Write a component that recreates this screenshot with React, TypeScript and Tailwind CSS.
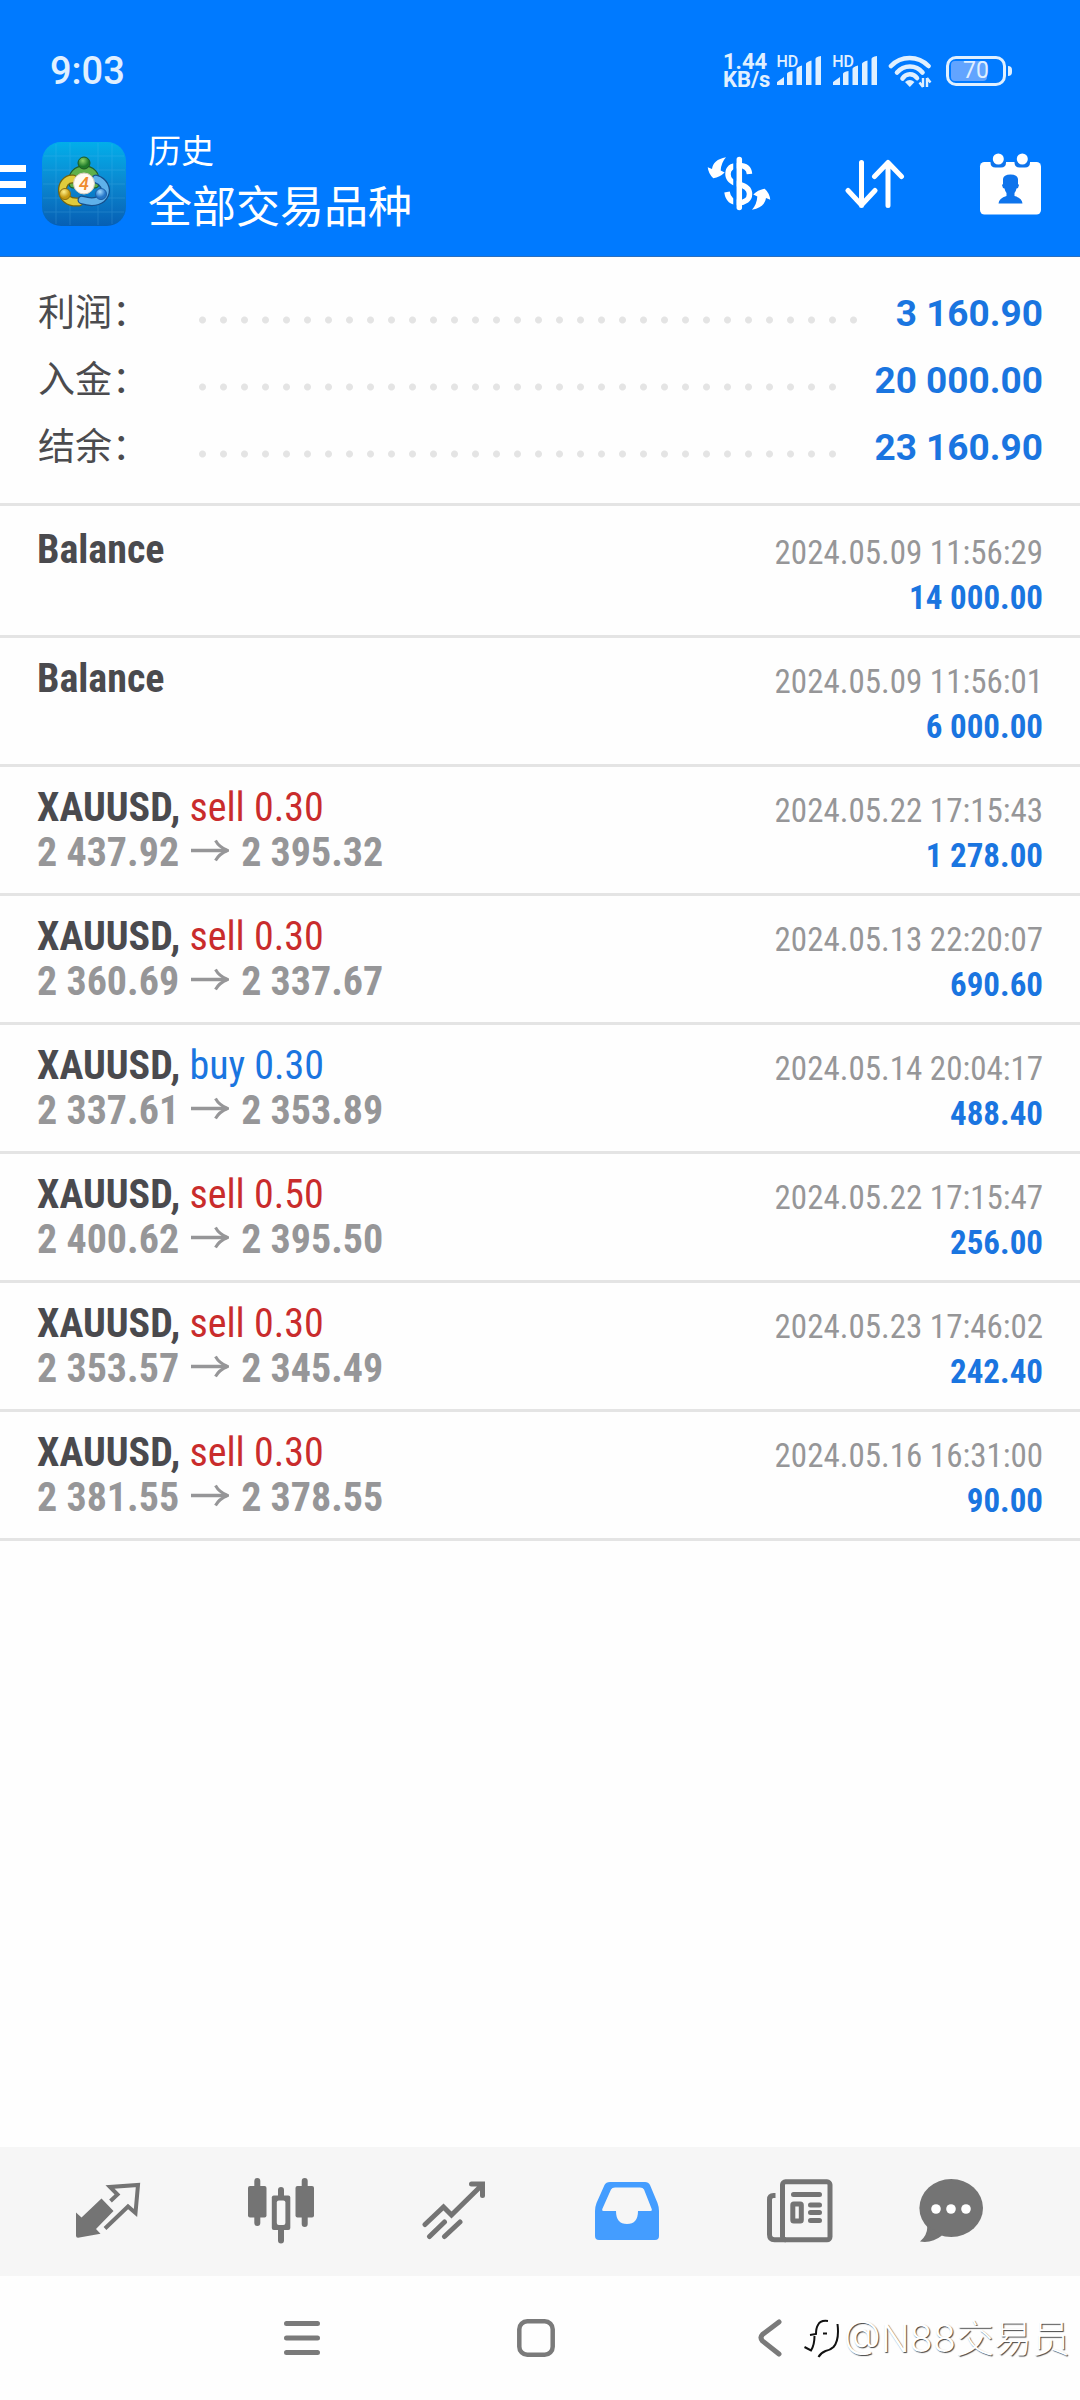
import React from "react";

type Deal = {
  symbol: string;
  side?: "buy" | "sell";
  volume?: string;
  open?: string;
  close?: string;
  time: string;
  profit: string;
};

const summary = [
  { label: "利润", value: "3 160.90" },
  { label: "入金", value: "20 000.00" },
  { label: "结余", value: "23 160.90" },
];

const deals: Deal[] = [
  { symbol: "Balance", time: "2024.05.09 11:56:29", profit: "14 000.00" },
  { symbol: "Balance", time: "2024.05.09 11:56:01", profit: "6 000.00" },
  { symbol: "XAUUSD", side: "sell", volume: "0.30", open: "2 437.92", close: "2 395.32", time: "2024.05.22 17:15:43", profit: "1 278.00" },
  { symbol: "XAUUSD", side: "sell", volume: "0.30", open: "2 360.69", close: "2 337.67", time: "2024.05.13 22:20:07", profit: "690.60" },
  { symbol: "XAUUSD", side: "buy", volume: "0.30", open: "2 337.61", close: "2 353.89", time: "2024.05.14 20:04:17", profit: "488.40" },
  { symbol: "XAUUSD", side: "sell", volume: "0.50", open: "2 400.62", close: "2 395.50", time: "2024.05.22 17:15:47", profit: "256.00" },
  { symbol: "XAUUSD", side: "sell", volume: "0.30", open: "2 353.57", close: "2 345.49", time: "2024.05.23 17:46:02", profit: "242.40" },
  { symbol: "XAUUSD", side: "sell", volume: "0.30", open: "2 381.55", close: "2 378.55", time: "2024.05.16 16:31:00", profit: "90.00" },
];

const Signal = () => (
  <div className="flex items-start">
    <span className="-mr-[22px] text-[16px] leading-3 font-medium">HD</span>
    <svg width="46" height="30" viewBox="0 0 46 30" fill="currentColor" aria-hidden="true">
      <path d="M1 29v-3l7-5v8zM11 29V18q0-2 5.500-3v14zM20.500 29V13q0-2 5.500-3.500V29zM30 29V8q0-2 5.500-3.500V29zM39.500 29V3q0-2 5.500-3v29z" />
    </svg>
  </div>
);

const Wifi = () => (
  <svg width="44" height="34" viewBox="0 0 44 34" aria-hidden="true">
    <g fill="none" stroke="currentColor" strokeWidth="4.600" strokeLinecap="round">
      <path d="M3 12C13 1.300 30 1.300 40.500 12" />
      <path d="M9 18.500C16 10.500 28 10.500 34.500 18.500" />
      <path d="M14.500 24.500C18 19 25.500 19 29 24" />
    </g>
    <path d="M17 28q4.700-4 9.500 0l-4.700 5z" fill="currentColor" />
    <path d="M35 24v9M39 33v-9M31.500 28.500l3.500 4.500M42.500 28.500L39 24" stroke="currentColor" strokeWidth="2.400" />
  </svg>
);

const StatusBar = () => (
  <div className="flex h-[132px] items-center justify-between pt-2.5 pr-[68px] pl-[50px] text-[#e0f0ff]">
    <span className="text-[38px] font-medium">9:03</span>
    <div className="flex items-center">
      <div className="mr-1.5 text-[22px] leading-[18px] font-bold">
        <p>1.44</p>
        <p>KB/s</p>
      </div>
      <div className="flex gap-2.5">
        <Signal />
        <Signal />
      </div>
      <span className="ml-2.5">
        <Wifi />
      </span>
      <div className="relative ml-3.5 flex h-[30px] w-[60px] items-center justify-center rounded-[10px] border-[3px] border-current">
        <div className="absolute inset-y-0.5 left-0.5 w-[36px] rounded-sm bg-[#62a4ff]" />
        <span className="relative text-[23px] leading-6">70</span>
      </div>
      <div className="ml-0.5 h-2.5 w-1 rounded-r-sm bg-current" />
    </div>
  </div>
);

const AppLogo = () => (
  <svg className="h-[84px] w-[84px]" viewBox="0 0 84 84" role="img" aria-label="MetaTrader 4">
    <defs>
      <linearGradient id="tile" x1="0" y1="0" x2="0" y2="1">
        <stop offset="0" stopColor="#02aeea" />
        <stop offset="0.500" stopColor="#0b87cf" />
        <stop offset="1" stopColor="#065fb4" />
      </linearGradient>
      <radialGradient id="green" cx="0.400" cy="0.300">
        <stop offset="0" stopColor="#8fd46a" />
        <stop offset="1" stopColor="#1f7a2a" />
      </radialGradient>
      <radialGradient id="yellow" cx="0.400" cy="0.300">
        <stop offset="0" stopColor="#fff08a" />
        <stop offset="1" stopColor="#c79a12" />
      </radialGradient>
      <radialGradient id="blue" cx="0.400" cy="0.300">
        <stop offset="0" stopColor="#a5dbff" />
        <stop offset="1" stopColor="#2576c8" />
      </radialGradient>
    </defs>
    <rect width="84" height="84" rx="19" fill="url(#tile)" />
    <path d="M14 2v80M28 1v82M56 1v82M70 2v80M2 14h80M1 28h82M1 42h82M1 56h82M2 70h80" stroke="#6cc5f5" strokeWidth="1" opacity="0.200" />
    <g fill="none" strokeLinecap="round">
      <path d="M31 42C27 23 57 23 53 42" stroke="#21602c" strokeWidth="9" />
      <path d="M31 42C27 23 57 23 53 42" stroke="#5fb04a" strokeWidth="6.500" />
      <path d="M31 37C17 36 15 62 37 60" stroke="#73640f" strokeWidth="9" />
      <path d="M31 37C17 36 15 62 37 60" stroke="#e0cb3c" strokeWidth="6.500" />
      <path d="M54 37C70 42 66 66 40 58" stroke="#154f8c" strokeWidth="9" />
      <path d="M54 37C70 42 66 66 40 58" stroke="#5fb1ea" strokeWidth="6.500" />
    </g>
    <circle cx="42" cy="21" r="6" fill="url(#green)" stroke="#1c5a24" />
    <circle cx="23" cy="52" r="5.500" fill="url(#yellow)" stroke="#8a6d10" />
    <circle cx="59" cy="52" r="5.500" fill="url(#blue)" stroke="#1c5fa8" />
    <circle cx="42" cy="41.500" r="10.500" fill="#fffaf2" stroke="#d9cfc0" />
    <text x="42" y="48" textAnchor="middle" fontSize="18" fontStyle="italic" fontWeight="500" fill="#ef8b2c">
      4
    </text>
  </svg>
);

const DollarIcon = () => (
  <svg width="64" height="56" viewBox="0 0 64 56" aria-hidden="true">
    <path
      d="M42.500 18C42 12 38 9.500 32 9.500C24 9.500 21 13 21 18C21 24 25 26.500 32 28.500C39 30 42.500 33 42.500 38C42.500 43.500 38 46.500 32 46.500C25 46.500 21 43 20 36"
      fill="none"
      stroke="#fff"
      strokeWidth="5.500"
    />
    <path d="M28 4v48" stroke="#007aff" strokeWidth="3.500" />
    <path d="M32.300 3.500v48" stroke="#fff" strokeWidth="5.500" strokeLinecap="round" />
    <path id="swap" d="M19 1.300C10 3 6 7 5 13L.700 11.300Q1.500 18 6.300 22.300Q13 21 17.700 16.500L13.700 14.500Q14 7 19 1.300Z" fill="#fff" />
    <use href="#swap" transform="rotate(180 32 27.500)" />
  </svg>
);

const SortIcon = () => (
  <svg width="60" height="50" viewBox="0 0 60 50" fill="none" stroke="#fff" strokeWidth="5" strokeLinecap="round" strokeLinejoin="round" aria-hidden="true">
    <path d="M16.500 3.500v43M3 31.500l13.500 14.500L30 31.500" />
    <path d="M43 46.500v-43M29.500 17.500L43 3.500l13.500 14" />
  </svg>
);

const CalendarIcon = () => (
  <svg width="63" height="64" viewBox="0 0 63 64" aria-hidden="true">
    <rect x="1" y="10" width="61" height="52.500" rx="4.500" fill="#fff" />
    <g fill="#0e74ec">
      <path d="M11.500 9.500h15.500v1q0 5-5 5h-5.500q-5 0-5-5zM35.500 9.500h15.500v1q0 5-5 5h-5.500q-5 0-5-5z" />
      <path d="M24 27q.500-4.500 7.500-4.500t7.500 4.500v5l1 1l-1 3l-1.500.500q-.500 2.500-2 4.500v3q7.500 2 8 7.500h-24q.500-5.500 8-7.500v-3q-1.500-2-2-4.500l-1.500-.500l-1-3l1-1z" />
    </g>
    <circle cx="19.300" cy="7" r="5.500" fill="#fff" />
    <circle cx="43.300" cy="7" r="5.500" fill="#fff" />
  </svg>
);

const Header = () => (
  <header className="border-b border-[#2a6fbf] bg-[#007aff] text-white">
    <StatusBar />
    <div className="flex items-center pb-4">
      <button type="button" aria-label="菜单" className="mb-1 flex w-[26px] flex-col gap-[9px]">
        <span className="h-[7px] w-full bg-white" />
        <span className="h-[7px] w-full bg-white" />
        <span className="h-[7px] w-full bg-white" />
      </button>
      <div className="mb-1 ml-4">
        <AppLogo />
      </div>
      <div className="ml-[22px] flex-1">
        <p className="text-[33px] leading-10">历史</p>
        <h1 className="mt-1 text-[44px] leading-[64px]">全部交易品种</h1>
      </div>
      <div className="mb-1 flex items-center gap-[74px] pr-[38px]">
        <button type="button" aria-label="货币">
          <DollarIcon />
        </button>
        <button type="button" aria-label="排序">
          <SortIcon />
        </button>
        <button type="button" aria-label="日期">
          <CalendarIcon />
        </button>
      </div>
    </div>
  </header>
);

const Summary = () => (
  <section className="border-b-[3px] border-[#e4e4e4] pt-[23px] pr-[37px] pb-[22px] pl-[38px]">
    {summary.map((item) => (
      <div key={item.label} className="flex h-[67px] items-center">
        <span className="w-[154px] text-[37px] text-[#4b4b4e]">{item.label}：</span>
        <span className="mr-8 h-[21px] flex-1 bg-[radial-gradient(circle,#e4e4e4_3px,transparent_4px)] bg-[length:21px_8px] bg-bottom-left bg-repeat-x" />
        <span className="text-[37px] font-bold text-[#1a75e0]">{item.value}</span>
      </div>
    ))}
  </section>
);

const PriceArrow = () => (
  <svg className="mx-3 inline-block align-baseline" width="38" height="31" viewBox="0 0 38 31" fill="none" stroke="currentColor" role="img" aria-label="→">
    <path d="M0 15.500h36" strokeWidth="3.500" />
    <path d="M24.500 5.500q3.500 6.500 12 10q-8.500 3.500-12 10" strokeWidth="3" />
  </svg>
);

const DealRow = ({ deal }: { deal: Deal }) => (
  <li className="flex h-[129px] justify-between border-b-[3px] border-[#e4e4e4] pt-[18px] pr-[37px] pl-[37px] font-['Roboto_Condensed','Liberation_Sans_Narrow',Roboto,sans-serif]">
    <div className="text-[40px] leading-[45px]">
      <p>
        <span className="font-bold text-[#4a4a4e]">
          {deal.symbol}
          {deal.side && ","}
        </span>
        {deal.side && (
          <span className={deal.side === "sell" ? "text-[#c92c2c]" : "text-[#1a75e0]"}>
            {" "}
            {deal.side} {deal.volume}
          </span>
        )}
      </p>
      {deal.open && (
        <p className="font-bold text-[#969698]">
          {deal.open}
          <PriceArrow />
          {deal.close}
        </p>
      )}
    </div>
    <div className="pt-[3px] text-right text-[33px] leading-[45px]">
      <p className="text-[#969698]">{deal.time}</p>
      <p className="font-bold text-[#1a75e0]">{deal.profit}</p>
    </div>
  </li>
);

const QuotesIcon = () => (
  <svg width="66" height="64" viewBox="0 -4 66 64" aria-hidden="true">
    <path d="M1 29.500l5.500 5L26.500 15.500l12 12.500L21 46l4.500 4.700L3 54.700q-2 0-2-2z" fill="currentColor" />
    <path d="M30 45.500L53 23.500l7.500 6.500l2.500-28l-28 2l7.500 7.500L35.500 18" fill="none" stroke="currentColor" strokeWidth="4" />
  </svg>
);

const ChartIcon = () => (
  <svg width="66" height="66" viewBox="0 0 66 66" fill="currentColor" aria-hidden="true">
    <path d="M9.300 3v42M33 12v50.500M56.700 3v43" stroke="currentColor" strokeWidth="6" strokeLinecap="round" />
    <rect x="0" y="8" width="18.500" height="31.500" rx="2" />
    <rect x="23.800" y="17.500" width="18.500" height="34.500" rx="2" />
    <rect x="47.500" y="8" width="18.500" height="31.500" rx="2" />
    <rect x="28.800" y="22.500" width="8.600" height="24.500" rx="2" fill="#f6f6f6" />
  </svg>
);

const TradeIcon = () => (
  <svg width="64" height="60" viewBox="0 0 64 60" fill="none" stroke="currentColor" strokeWidth="5" strokeLinecap="round" aria-hidden="true">
    <path d="M3 43.500L21.500 26l8 8L60 4M49.500 3h11v11.500M22.500 41L7.500 55.500M38 41L22.500 55.500" />
  </svg>
);

const HistoryIcon = () => (
  <svg width="64" height="58" viewBox="0 0 64 58" fill="currentColor" fillRule="evenodd" aria-hidden="true">
    <path d="M15 0h35q3.500 0 5 3l7.500 18q1.500 4 1.500 8v25q0 4-4 4H4q-4 0-4-4V29q0-4 1.500-8L9.500 3q1.500-3 5.500-3zM20 5.500q-3 0-4 2L7.500 26.500q-1 2.500 1 2.500h12.500q0 13 11 13t11-13h12.500q2 0 1-2.500L49 7.500q-1-2-4-2z" />
  </svg>
);

const NewsIcon = () => (
  <svg width="67" height="64" viewBox="0 0 67 64" fill="none" stroke="currentColor" strokeWidth="5" aria-hidden="true">
    <rect x="16.500" y="2.800" width="47.500" height="58" rx="3" />
    <path d="M9.500 16.500h-2q-4 0-4 4v35q0 5.300 5 5.300H20" />
    <path d="M27.500 15.500h26M44.500 26h9M44.500 33.500h9M44.500 41.500h9" strokeLinecap="round" />
    <rect x="26.800" y="25" width="8.500" height="17" rx="1" />
  </svg>
);

const ChatIcon = () => (
  <svg width="64" height="64" viewBox="0 0 64 64" fill="currentColor" aria-hidden="true">
    <ellipse cx="32.200" cy="29" rx="31.800" ry="29" />
    <path d="M8 46q1.500 9-7 16.500q12 2 22-6z" />
    <g fill="#fff">
      <circle cx="17" cy="30" r="4.800" />
      <circle cx="32" cy="30" r="4.800" />
      <circle cx="47" cy="30" r="4.800" />
    </g>
  </svg>
);

const tabs = [
  { label: "行情", icon: <QuotesIcon /> },
  { label: "图表", icon: <ChartIcon /> },
  { label: "交易", icon: <TradeIcon /> },
  { label: "历史", icon: <HistoryIcon />, active: true },
  { label: "新闻", icon: <NewsIcon /> },
  { label: "消息", icon: <ChatIcon /> },
];

const TabBar = () => (
  <nav className="grid h-[129px] grid-cols-[173fr_173fr_173fr_173fr_173fr_130fr] bg-[#f6f6f6] pr-16 pb-0.5 pl-[21px]">
    {tabs.map((tab) => (
      <button
        key={tab.label}
        type="button"
        aria-label={tab.label}
        className={
          tab.active
            ? "flex items-center justify-center text-[#449dff]"
            : "flex items-center justify-center text-[#747474]"
        }
      >
        {tab.icon}
      </button>
    ))}
  </nav>
);

const SystemNav = () => (
  <div className="relative grid h-[124px] grid-cols-[185fr_234fr_234fr_234fr_193fr] items-center text-[#7a7a7a]">
    <button type="button" aria-label="最近任务" className="col-start-2 flex justify-center">
      <svg width="36" height="36" viewBox="0 0 36 36" stroke="currentColor" strokeWidth="5" strokeLinecap="round">
        <path d="M2.500 3.500h31M2.500 18h31M2.500 32.500h31" />
      </svg>
    </button>
    <button type="button" aria-label="主屏幕" className="flex justify-center">
      <svg width="38" height="38" viewBox="0 0 38 38" fill="none" stroke="currentColor" strokeWidth="4.500">
        <rect x="2.300" y="2.300" width="33.400" height="33.400" rx="8" />
      </svg>
    </button>
    <button type="button" aria-label="返回" className="flex justify-center">
      <svg width="24" height="38" viewBox="0 0 24 38" fill="none" stroke="currentColor" strokeWidth="5" strokeLinecap="round">
        <path d="M21 3L4.500 15.500q-3 3 0 6.500L21 35" />
      </svg>
    </button>
    {/* author signature over the bar */}
    <div className="absolute top-9 right-2.5 flex items-center gap-1">
      <svg width="36" height="40" viewBox="0 0 36 40" fill="none" stroke="#111" strokeWidth="2" aria-hidden="true">
        <path d="M24 3q-8-1-10 4q-2 3-2 9l-6 1M10.500 18q0 9-3.500 14.500l-6.500-3.500M19 15.500h4" />
        <path d="M33.500 6q2 16-4 23q-3 3-8 4q-5 2-7 6" />
      </svg>
      <span className="font-[Inter,'Noto_Sans_CJK_SC',sans-serif] text-[38px] leading-[52px] font-light text-white [text-shadow:1px_1px_1px_#444]">
        @N88交易员
      </span>
    </div>
  </div>
);

const App = () => {
  return (
    <div className="flex min-h-screen flex-col bg-[#fefefe] font-[Roboto,'Noto_Sans_CJK_SC',sans-serif]">
      <Header />
      <main className="flex-1">
        <Summary />
        <ul className="pt-[3px]">
          {deals.map((deal) => (
            <DealRow key={deal.time} deal={deal} />
          ))}
        </ul>
      </main>
      <TabBar />
      <SystemNav />
    </div>
  );
};

export default App;
